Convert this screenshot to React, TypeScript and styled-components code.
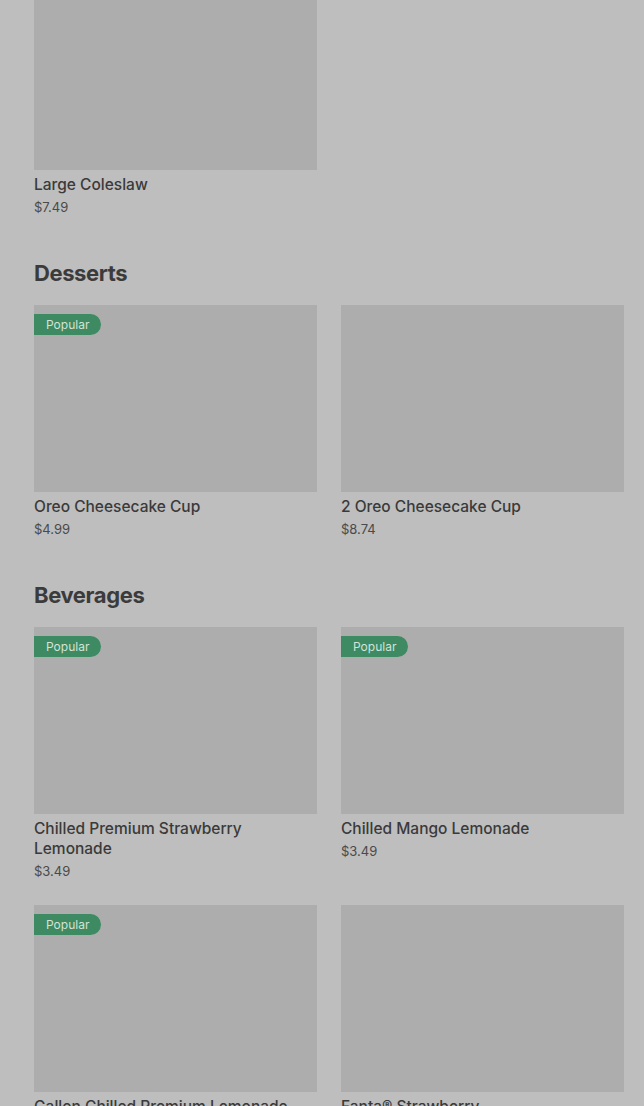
import styled, { createGlobalStyle } from 'styled-components';

type Item = { name: string; price: string; popular?: boolean };
type Section = { title?: string; items: Item[] };

const sections: Section[] = [
  { items: [{ name: 'Large Coleslaw', price: '$7.49' }] },
  {
    title: 'Desserts',
    items: [
      { name: 'Oreo Cheesecake Cup', price: '$4.99', popular: true },
      { name: '2 Oreo Cheesecake Cup', price: '$8.74' },
    ],
  },
  {
    title: 'Beverages',
    items: [
      { name: 'Chilled Premium Strawberry Lemonade', price: '$3.49', popular: true },
      { name: 'Chilled Mango Lemonade', price: '$3.49', popular: true },
      { name: 'Gallon Chilled Premium Lemonade', price: '$9.99', popular: true },
      { name: 'Fanta® Strawberry', price: '$2.99' },
    ],
  },
];

export default function App() {
  return (
    <>
      <GlobalStyle />
      <Page>
        {sections.map((section, i) => (
          <SectionBlock key={i}>
            {section.title && <Heading>{section.title}</Heading>}
            <Grid>
              {section.items.map((item) => (
                <Card key={item.name}>
                  <Thumb>{item.popular && <Badge>Popular</Badge>}</Thumb>
                  <Name>{item.name}</Name>
                  <Price>{item.price}</Price>
                </Card>
              ))}
            </Grid>
          </SectionBlock>
        ))}
      </Page>
    </>
  );
}

const GlobalStyle = createGlobalStyle`
  html, body {
    margin: 0;
    padding: 0;
    background: #bebebe;
    overflow: hidden;
    font-family: Inter, "Noto Sans", sans-serif;
  }
`;

const Page = styled.main`
  height: 1106px;
  overflow: hidden;
  padding: 0 20px 0 34px;
  background: #bebebe;
  box-sizing: border-box;
  display: flex;
  flex-direction: column;

  & > :first-child {
    margin-top: -17px;
  }
`;

const SectionBlock = styled.section`
  display: flex;
  flex-direction: column;
  margin-top: 40px;
`;

const Heading = styled.h2`
  margin: 0 0 16px;
  font-size: 22px;
  line-height: 32px;
  font-weight: 700;
  letter-spacing: -0.4px;
  color: #3b3b3b;
`;

const Grid = styled.div`
  display: grid;
  grid-template-columns: 283px 283px;
  column-gap: 24px;
  row-gap: 24px;
`;

const Card = styled.div`
  display: flex;
  flex-direction: column;
`;

const Thumb = styled.div`
  position: relative;
  height: 187px;
  background: #adadad;
`;

const Badge = styled.span`
  position: absolute;
  top: 9px;
  left: 0;
  height: 21px;
  padding: 0 12px;
  display: flex;
  align-items: center;
  border-radius: 0 11px 11px 0;
  background: #3d8a63;
  color: #d3e3d8;
  font-size: 12px;
  font-weight: 400;
`;

const Name = styled.div`
  margin-top: 5px;
  font-size: 15.5px;
  line-height: 20px;
  font-weight: 500;
  color: #3a3a3a;
`;

const Price = styled.div`
  margin-top: 2px;
  font-size: 13px;
  line-height: 20px;
  color: #4a4a4a;
`;
